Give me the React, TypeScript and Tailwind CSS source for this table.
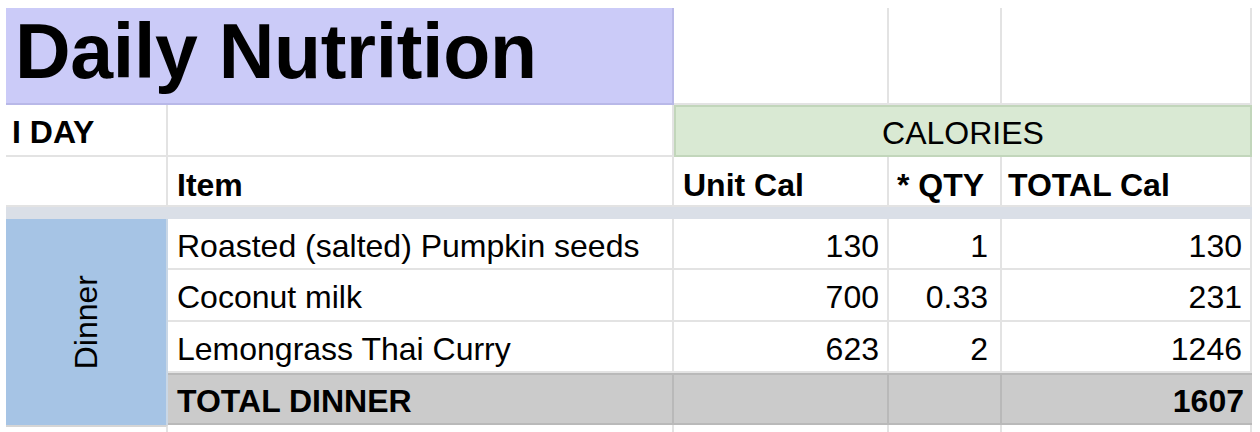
const line = 'border-r-2 border-b-2 border-[#e3e3e3]';
const num = `${line} flex items-center justify-end pr-2 pt-1`;

const items = [
  { name: 'Roasted (salted) Pumpkin seeds', unit: '130', qty: '1', total: '130' },
  { name: 'Coconut milk', unit: '700', qty: '0.33', total: '231' },
  { name: 'Lemongrass Thai Curry', unit: '623', qty: '2', total: '1246' },
];

export default function App() {
  return (
    <div className="w-[1260px] h-[432px] overflow-hidden bg-white pl-[6px] pt-[8px] text-black font-['Liberation_Sans',Arial,sans-serif] text-[32px] leading-none">
      <div className="grid grid-cols-[162px_506px_215px_113px_250px] grid-rows-[97px_52px_50px_12px_51px_52px_51px_52px_40px]">
        {/* title row */}
        <div className="col-span-2 bg-[#cbcbf8] border-r-2 border-b-2 border-[#b8b8e8] flex items-center pl-[9px] pb-2">
          <span className="text-[77px] font-bold tracking-[-0.3px]">Daily Nutrition</span>
        </div>
        <div className={line} />
        <div className={line} />
        <div className={line} />

        {/* I DAY / CALORIES */}
        <div className={`${line} flex items-center pl-[6px] pt-1 font-bold`}>I DAY</div>
        <div className={line} />
        <div className="col-span-3 bg-[#d9e9d3] border-2 border-[#c2d6bb] flex items-center justify-center pt-1">
          CALORIES
        </div>

        {/* header */}
        <div className={line} />
        <div className={`${line} flex items-center pl-[9px] pt-2 font-bold`}>Item</div>
        <div className={`${line} flex items-center pl-[9px] pt-2 font-bold`}>Unit Cal</div>
        <div className={`${line} flex items-center pl-[8px] pt-2 font-bold`}>* QTY</div>
        <div className={`${line} flex items-center pl-[6px] pt-2 font-bold`}>TOTAL Cal</div>

        {/* separator */}
        <div className="col-span-5 bg-[#dadfe7]" />

        {/* dinner block */}
        <div className="row-span-4 bg-[#a6c4e5] border-r-2 border-[#c9d7e6] flex items-center justify-center">
          <span className="[writing-mode:vertical-rl] rotate-180">Dinner</span>
        </div>
        {items.map((it) => (
          <div key={it.name} className="contents">
            <div className={`${line} flex items-center pl-[9px] pt-1`}>{it.name}</div>
            <div className={num}>{it.unit}</div>
            <div className={`${num} pr-3`}>{it.qty}</div>
            <div className={num}>{it.total}</div>
          </div>
        ))}

        {/* total */}
        <div className="bg-[#cbcbcb] border-t-2 border-b-2 border-r-2 border-[#b9b9b9] flex items-center pl-[9px] pt-1 font-bold">
          TOTAL DINNER
        </div>
        <div className="bg-[#cbcbcb] border-t-2 border-b-2 border-r-2 border-[#b9b9b9]" />
        <div className="bg-[#cbcbcb] border-t-2 border-b-2 border-r-2 border-[#b9b9b9]" />
        <div className="bg-[#cbcbcb] border-t-2 border-b-2 border-[#b9b9b9] flex items-center justify-end pr-2 pt-1 font-bold">
          1607
        </div>

        {/* next row, cut off */}
        <div className={`${line} border-t-2 border-t-[#d5d5d5]`} />
        <div className={line} />
        <div className={line} />
        <div className={line} />
        <div className={line} />
      </div>
    </div>
  );
}
